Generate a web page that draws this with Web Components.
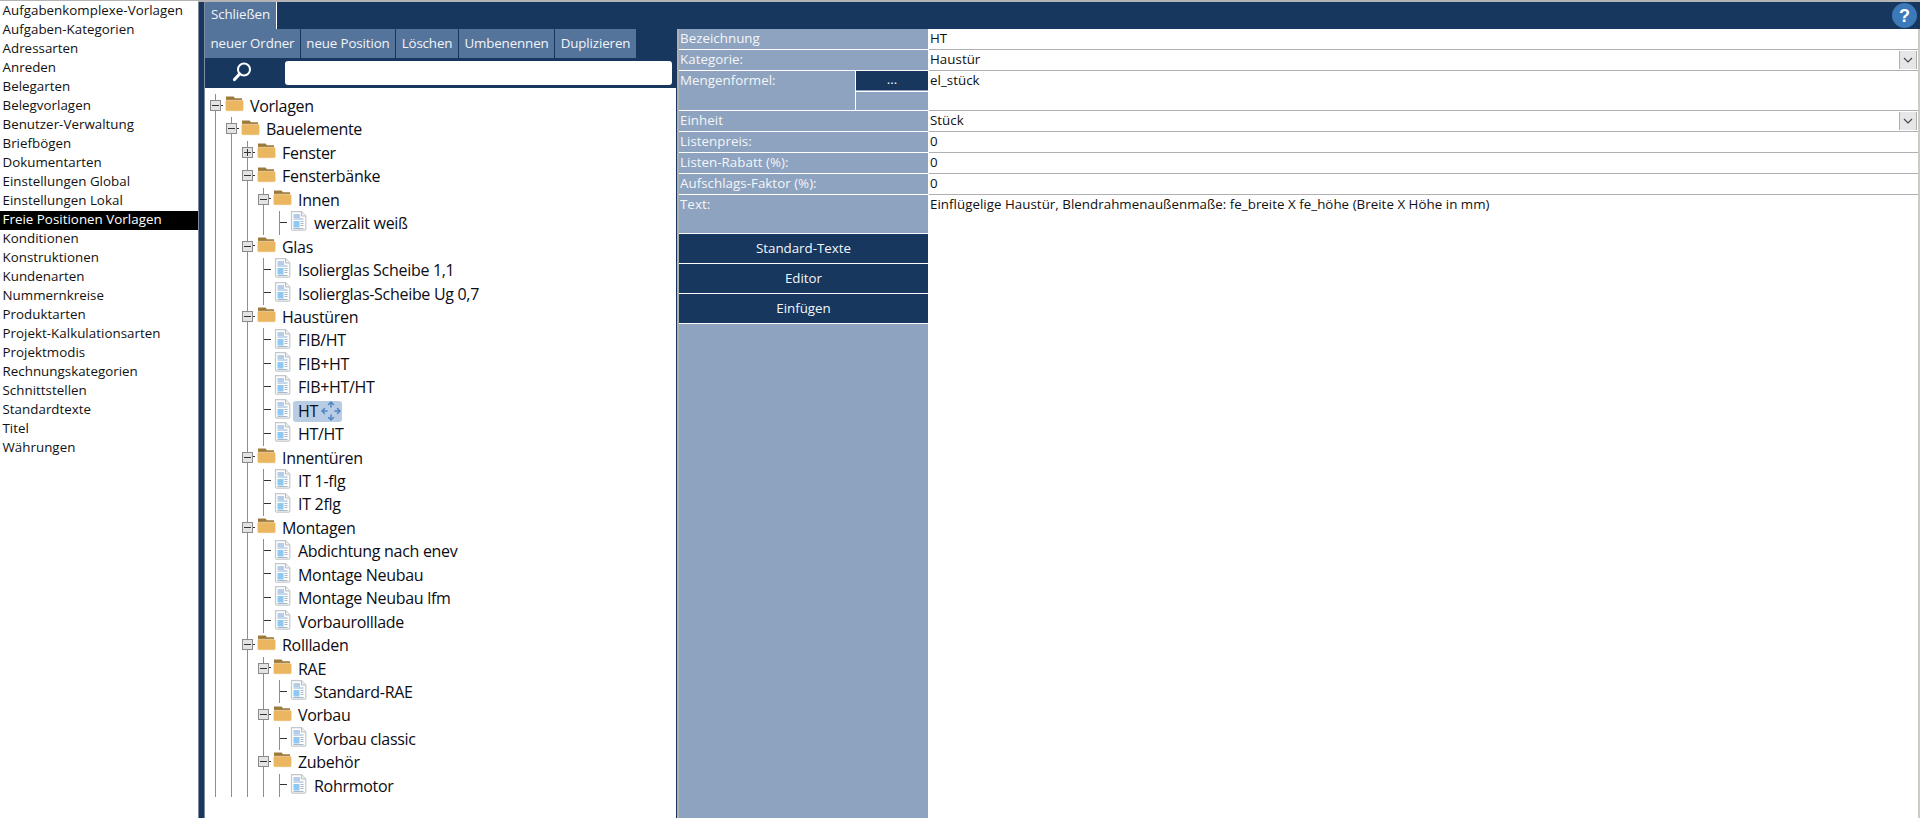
<!DOCTYPE html>
<html lang="de"><head><meta charset="utf-8"><title>Vorlagen</title>
<style>
html,body{margin:0;height:100%;overflow:hidden;background:#fff}
body{font:13.33px "Open Sans","Noto Sans",sans-serif}
</style></head><body>
<app-shell></app-shell>
<script>
const FONT='"Open Sans","Noto Sans",sans-serif';
function def(name,html){customElements.define(name,class extends HTMLElement{
  connectedCallback(){if(this.shadowRoot)return;const r=this.attachShadow({mode:'open'});r.innerHTML=html(this);}
});}

def('side-list',()=>{
  const items=['Aufgabenkomplexe-Vorlagen','Aufgaben-Kategorien','Adressarten','Anreden','Belegarten','Belegvorlagen','Benutzer-Verwaltung','Briefbögen','Dokumentarten','Einstellungen Global','Einstellungen Lokal','Freie Positionen Vorlagen','Konditionen','Konstruktionen','Kundenarten','Nummernkreise','Produktarten','Projekt-Kalkulationsarten','Projektmodis','Rechnungskategorien','Schnittstellen','Standardtexte','Titel','Währungen'];
  return `<style>
  :host{display:block;width:198px;background:#fff;padding-top:1px;box-sizing:border-box;flex:none}
  div{height:19px;padding-left:2.5px;font:13.33px/17px ${FONT};letter-spacing:.03px;color:#111;white-space:nowrap}
  .sel{background:#000;color:#fff}
  </style>`+items.map((t,i)=>`<div class="${i==11?'sel':''}">${t}</div>`).join('');
});

def('tool-button',()=>`<style>
  :host{display:flex;align-items:center;justify-content:center;background:#55749c;color:#f2f5f9;font:13.33px ${FONT};letter-spacing:-.12px;padding:0 0 2px;white-space:nowrap;height:100%;box-sizing:border-box}
  </style><slot></slot>`);

def('search-bar',()=>`<style>
  :host{display:flex;align-items:flex-start;height:30px;background:#17375e;box-sizing:border-box;padding-top:3px;flex:none}
  .ic{width:80px;display:flex;justify-content:center;flex:none}
  svg{display:block;margin-left:-6px;margin-top:1px}
  .inp{width:387px;height:24px;background:#fff;border-radius:3px}
  </style><div class="ic"><svg width="20" height="20" viewBox="0 0 20 20"><circle cx="12" cy="7.5" r="6" fill="none" stroke="#fff" stroke-width="2"/><path d="M7.6 12 2.5 17.5" stroke="#fff" stroke-width="3.2" stroke-linecap="round"/></svg></div><div class="inp"></div>`);

const folderSvg=`<svg width="19" height="17" viewBox="0 0 19 17"><path d="M1 1.5h7.5l1.5 1.8h7v4H1z" fill="#9c7a3c"/><path d="M.5 7c0-1.2.6-1.7 1.7-1.7h14.600c1.200 0 1.700.5 1.700 1.700v7.200c0 1.200-.6 1.800-1.700 1.800H2.200c-1.200 0-1.700-.6-1.700-1.800z" fill="#ebb660" stroke="#f8e4c4" stroke-width=".6"/></svg>`;
const fileSvg=`<svg width="17" height="20" viewBox="0 0 17 20"><path d="M1.500.7h10l4.300 4.300v13c0 .7-.5 1.200-1.200 1.200H2.700c-.7 0-1.200-.5-1.200-1.200z" fill="#fdfdfd" stroke="#c4c8cc" stroke-width="1.200"/><path d="M11.500.7v4.300h4.300" fill="#eef1f4" stroke="#b8bcc0"/><path d="M3.500 4h6.500M3.500 6h6.500" stroke="#6f9bd0"/><path d="M3.500 8h10" stroke="#8fb2dc"/><rect x="3.500" y="10" width="6" height="6.500" fill="#8fc8f2"/><path d="M10.500 10.500h3M10.500 12.500h3M10.500 14.500h3M3.500 17.500h10" stroke="#a9b8c8"/></svg>`;
const moveSvg=`<svg width="20" height="20" viewBox="0 0 20 20" fill="none" stroke="#4f86c6" stroke-width="1.500" stroke-linecap="round" stroke-linejoin="round"><path d="M10 1v5M7.500 3.500 10 1l2.500 2.500M10 14v5M7.500 16.500 10 19l2.500-2.500M1 10h5M3.500 7.500 1 10l2.500 2.500M14 10h5M16.500 7.500 19 10l-2.500 2.500"/></svg>`;

def('tree-row',h=>{
  const lvl=+h.getAttribute('level'),kind=h.getAttribute('kind'),sel=h.hasAttribute('selected'),leaf=kind==='leaf';
  let cells='';
  for(let k=0;k<lvl;k++)cells+='<span class="c"><i class="v"></i></span>';
  if(leaf)cells+='<span class="c"><i class="v"></i><i class="stub"></i></span>';
  else cells+=`<span class="c"><i class="v"></i><i class="tick"></i><b class="box ${kind==='closed'?'plus':''}"></b></span>`;
  return `<style>
  :host{display:flex;height:23.44px;align-items:stretch;white-space:nowrap}
  .c{width:16px;flex:none;position:relative;display:block}
  .v{position:absolute;left:8px;top:0;bottom:0;width:1px;background:#8e8e8e}
  .stub{position:absolute;left:9px;width:7px;top:50%;height:1px;margin-top:-1px;background:#333}
  .tick{position:absolute;left:14px;width:2px;top:50%;height:1px;margin-top:-1px;background:#333}
  .box{position:absolute;left:3px;top:6px;width:9px;height:9px;border:1px solid #8a8a8a;background:#e3e3e3}
  .box::before{content:"";position:absolute;left:1px;right:1px;top:4px;height:1px;background:#333}
  .plus::after{content:"";position:absolute;top:1px;bottom:1px;left:4px;width:1px;background:#333}
  .ico{flex:none;display:flex;align-items:center;${leaf?'width:24px;padding-left:3px':'width:25px;padding-left:2px'}}
  .ico svg{display:block;margin-top:${leaf?-3:-4}px}
  .t{font:16px ${FONT};letter-spacing:-.3px;color:#0c0c14;display:inline-flex;align-items:center;line-height:21px;height:21px;margin-top:2px;${sel?'background:#b8cce4;border-radius:3px;margin-left:-5px;padding:0 1px 0 5px;gap:3px;':''}}
  .t svg{display:block}
  </style>${cells}<span class="ico">${leaf?fileSvg:folderSvg}</span><span class="t"><slot></slot>${sel?moveSvg:''}</span>`;
});

def('tree-view',()=>{
  const rows=[[0,'open','Vorlagen'],[1,'open','Bauelemente'],[2,'closed','Fenster'],[2,'open','Fensterbänke'],[3,'open','Innen'],[4,'leaf','werzalit weiß'],[2,'open','Glas'],[3,'leaf','Isolierglas Scheibe 1,1'],[3,'leaf','Isolierglas-Scheibe Ug 0,7'],[2,'open','Haustüren'],[3,'leaf','FIB/HT'],[3,'leaf','FIB+HT'],[3,'leaf','FIB+HT/HT'],[3,'leaf','HT',1],[3,'leaf','HT/HT'],[2,'open','Innentüren'],[3,'leaf','IT 1-flg'],[3,'leaf','IT 2flg'],[2,'open','Montagen'],[3,'leaf','Abdichtung nach enev'],[3,'leaf','Montage Neubau'],[3,'leaf','Montage Neubau lfm'],[3,'leaf','Vorbaurolllade'],[2,'open','Rollladen'],[3,'open','RAE'],[4,'leaf','Standard-RAE'],[3,'open','Vorbau'],[4,'leaf','Vorbau classic'],[3,'open','Zubehör'],[4,'leaf','Rohrmotor']];
  return `<style>:host{display:block;flex:1;background:#fff;padding:6px 0 0 2px;overflow:hidden;min-height:0;box-sizing:border-box;margin-right:1px}</style>`+
  rows.map(r=>`<tree-row level="${r[0]}" kind="${r[1]}" ${r[3]?'selected':''}>${r[2]}</tree-row>`).join('');
});

def('left-pane',()=>`<style>
  :host{display:flex;flex-direction:column;width:472px;flex:none;min-height:0}
  .tools{display:flex;height:29px;background:#17375e;gap:1px;flex:none}
  </style>
  <div class="tools"><tool-button style="width:95px">neuer Ordner</tool-button><tool-button style="width:94px">neue Position</tool-button><tool-button style="width:62px">Löschen</tool-button><tool-button style="width:95px">Umbenennen</tool-button><tool-button style="width:81px">Duplizieren</tool-button></div>
  <search-bar></search-bar><tree-view></tree-view>`);

const TXT=`font:13.33px/19px ${FONT};letter-spacing:.03px;padding-left:1px`;
def('form-row',h=>{
  const label=h.getAttribute('label'),val=h.getAttribute('value')||'',combo=h.hasAttribute('combo');
  return `<style>
  :host{display:grid;grid-template-columns:249px 1fr;column-gap:1px;height:21px;box-sizing:border-box;border-bottom:1px solid #fff;flex:none}
  .l{background:#8da3bf;color:#f4f6f9;${TXT}}
  .v{background:#fff;color:#111;${TXT};box-shadow:0 1px 0 #b0b0b0;display:flex;justify-content:space-between}
  .dd{width:16px;height:18px;background:#e6e6e6;border:1px solid #b0b0b0;border-width:0 1px 0 1px;margin:1px 1px 0 0;display:flex;align-items:center;justify-content:center}
  </style><div class="l">${label}</div><div class="v"><span>${val}</span>${combo?'<span class="dd"><svg width="10" height="6" viewBox="0 0 10 6"><path d="M1 1l4 4 4-4" fill="none" stroke="#444" stroke-width="1.100"/></svg></span>':''}</div>`;
});

def('form-pane',()=>`<style>
  :host{display:flex;flex-direction:column;flex:1;min-width:0;border-left:2px solid #b0b0b0;border-right:2px solid #cfcac4;background:#fff;height:789px;box-sizing:border-box}
  .f{display:grid;grid-template-columns:249px 1fr;column-gap:1px;height:40px;flex:none}
  .fl{background:#8da3bf;display:grid;grid-template-columns:176px 72px;grid-template-rows:19px 20px;column-gap:1px;border-bottom:1px solid #fff}
  .lbl{color:#f4f6f9;${TXT};grid-row:1/3;border-right:1px solid #fff;margin-right:-1px}
  .b1{background:#17375e;color:#f4f6f9;height:19px;box-sizing:border-box;text-align:center;font:13.33px/17px ${FONT}}
  .b2{border-top:1px solid #fff;margin-top:1px}
  .fv{background:#fff;color:#111;${TXT};box-shadow:0 1px 0 #b0b0b0;height:39px}
  .t{display:grid;grid-template-columns:249px 1fr;column-gap:1px;height:39px;flex:none}
  .tl{background:#8da3bf;color:#f4f6f9;${TXT};border-bottom:1px solid #fff}
  .tv{color:#111;${TXT};white-space:nowrap}
  .side{background:#8da3bf;width:249px;flex:1;min-height:0;display:flex;flex-direction:column}
  .btn{background:#17375e;color:#f4f6f9;font:13.33px/28px ${FONT};text-align:center;border-bottom:1px solid #fff;box-sizing:border-box;height:30px}
  </style>
  <form-row label="Bezeichnung" value="HT"></form-row>
  <form-row label="Kategorie:" value="Haustür" combo></form-row>
  <div class="f"><div class="fl"><span class="lbl">Mengenformel:</span><span class="b1">...</span><span class="b2"></span></div><div class="fv">el_stück</div></div>
  <form-row label="Einheit" value="Stück" combo></form-row>
  <form-row label="Listenpreis:" value="0"></form-row>
  <form-row label="Listen-Rabatt (%):" value="0"></form-row>
  <form-row label="Aufschlags-Faktor (%):" value="0"></form-row>
  <div class="t"><div class="tl">Text:</div><div class="tv">Einflügelige Haustür, Blendrahmenaußenmaße: fe_breite X fe_höhe (Breite X Höhe in mm)</div></div>
  <div class="side"><div class="btn">Standard-Texte</div><div class="btn">Editor</div><div class="btn">Einfügen</div></div>`);

def('top-bar',()=>`<style>
  :host{display:flex;justify-content:space-between;height:27px;background:#17375e;flex:none}
  .tab{width:72px;background:#55749c;color:#f2f5f9;font:13.33px/25px ${FONT};letter-spacing:-.1px;text-align:center;border-right:1px solid #fff;box-sizing:border-box}
  svg{display:block;margin:1px 3px 0 0}
  </style><div class="tab">Schließen</div><svg width="25" height="25" viewBox="0 0 25 25"><circle cx="12.500" cy="12.500" r="12.500" fill="#3d78b8"/><text x="12.500" y="19" text-anchor="middle" font-family="Liberation Sans" font-weight="700" font-size="18" fill="#fff">?</text></svg>`);

def('app-shell',()=>`<style>
  :host{display:flex;flex-direction:column;height:818px;width:1920px;overflow:hidden;font:13.33px ${FONT}}
  .strip{height:2px;background:#b4b4b4;flex:none}
  .main{display:flex;flex:1;min-height:0}
  .rail{width:7px;box-sizing:border-box;flex:none;background:#17375e;border-left:1px solid #7d8b9c;border-right:1px solid #7d8b9c}
  .work{flex:1;min-width:0;display:flex;flex-direction:column}
  .body{flex:1;display:flex;min-height:0;background:#17375e}
  </style><div class="strip"></div><div class="main"><side-list style="margin-top:-1px"></side-list><div class="rail"></div>
  <div class="work"><top-bar></top-bar><div class="body"><left-pane></left-pane><form-pane></form-pane></div></div></div>`);
</script>
</body></html>
